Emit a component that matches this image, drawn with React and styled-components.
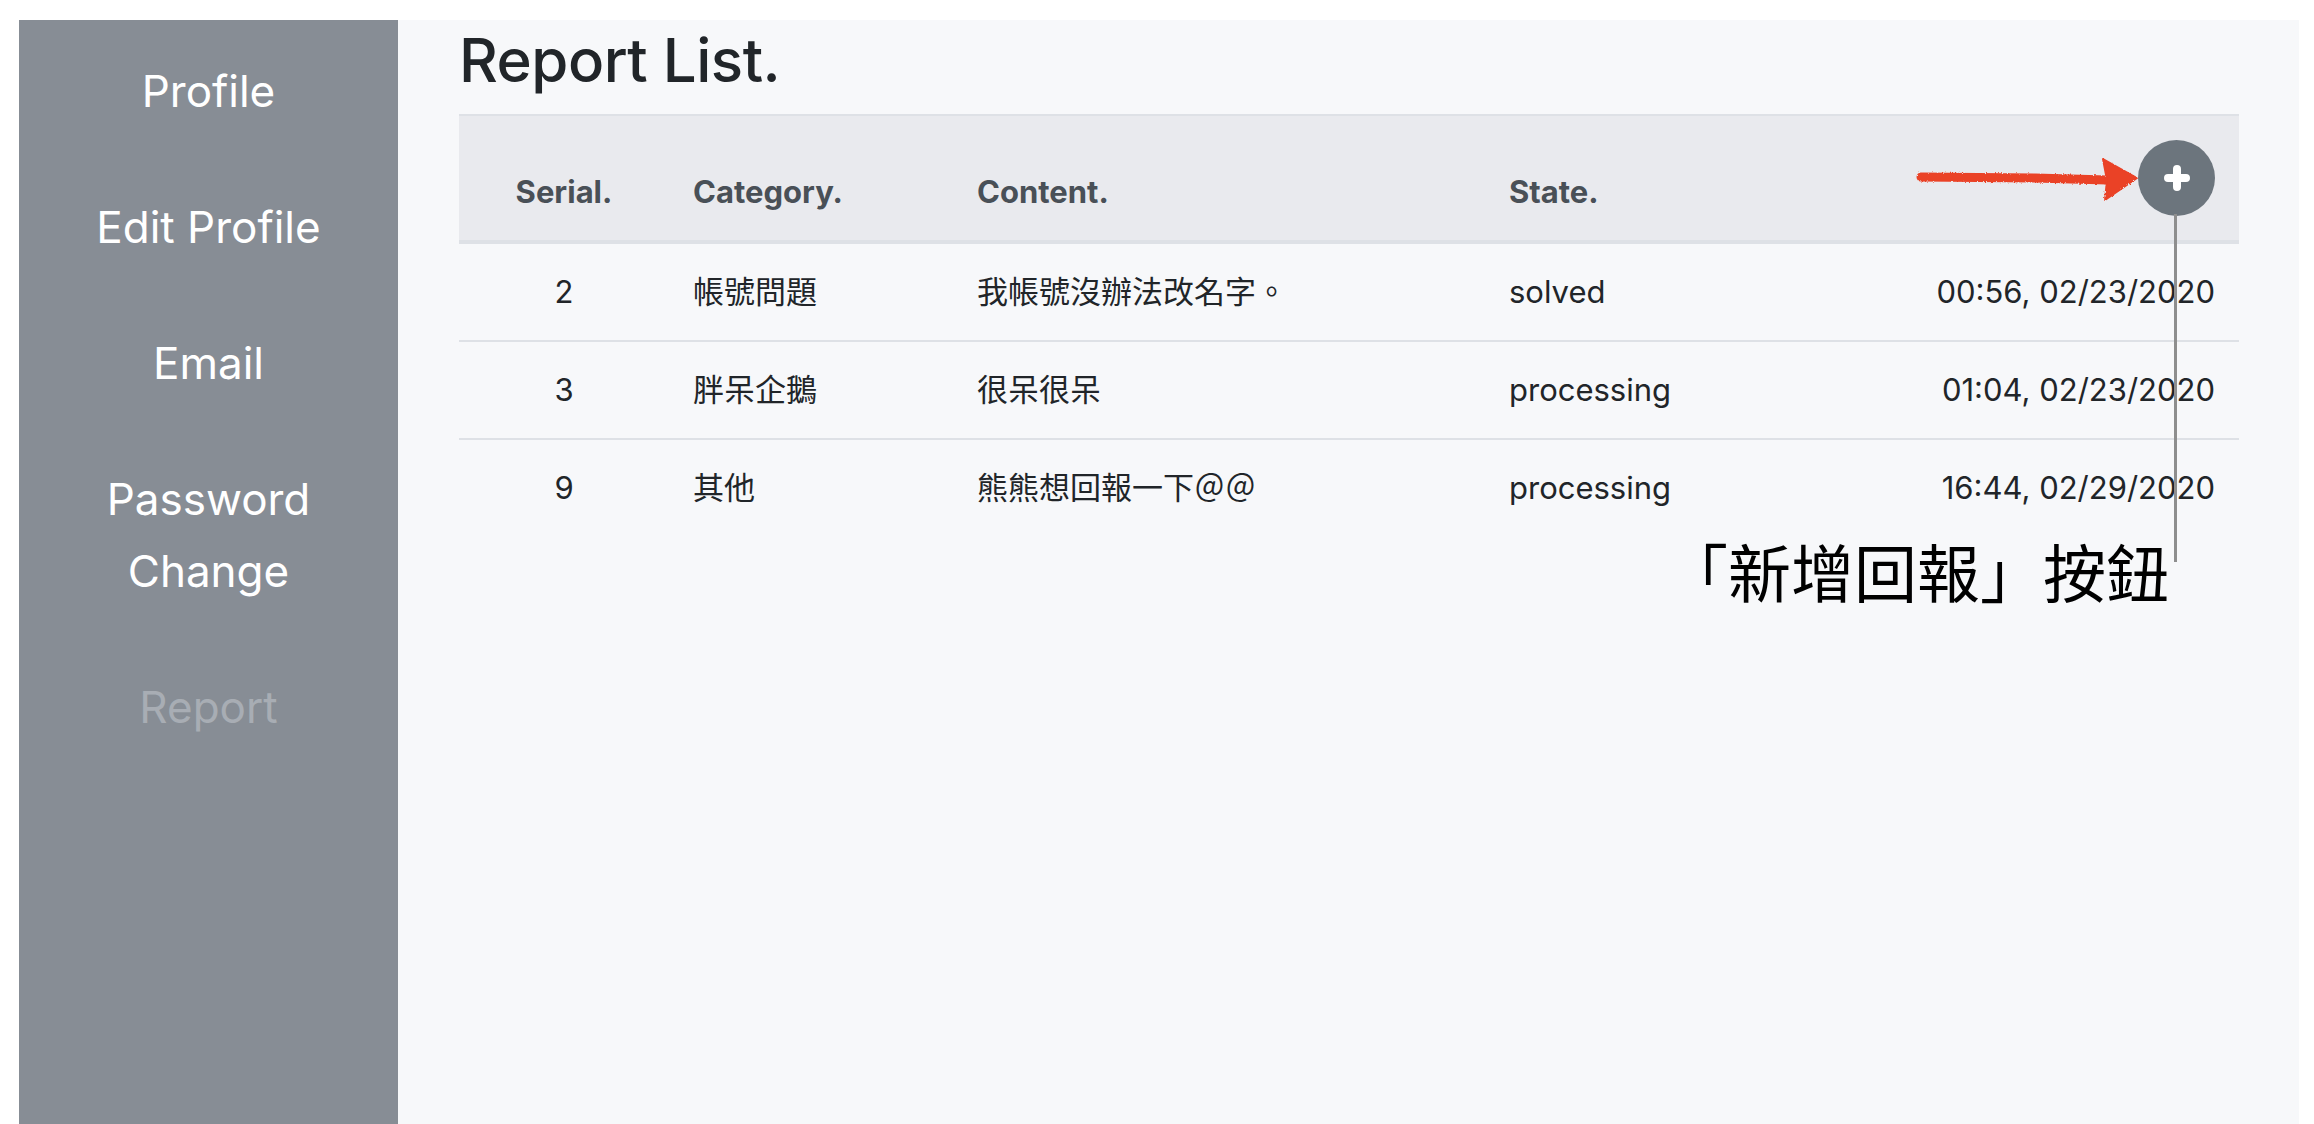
import React from 'react';
import styled, { createGlobalStyle } from 'styled-components';

const GlobalStyle = createGlobalStyle`
  html, body, #root {
    margin: 0;
    height: 100%;
    background: #ffffff;
  }
  body {
    padding: 20px 15px 0 19px;
    box-sizing: border-box;
    overflow: hidden;
    font-family: Inter, "Noto Sans CJK TC", sans-serif;
  }
`;

const reports = [
  { id: 2, category: '帳號問題', content: '我帳號沒辦法改名字。', state: 'solved', time: '00:56, 02/23/2020' },
  { id: 3, category: '胖呆企鵝', content: '很呆很呆', state: 'processing', time: '01:04, 02/23/2020' },
  { id: 9, category: '其他', content: '熊熊想回報一下＠＠', state: 'processing', time: '16:44, 02/29/2020' },
];

const navItems = [
  { label: 'Profile' },
  { label: 'Edit Profile' },
  { label: 'Email' },
  { label: 'Password Change', narrow: true },
  { label: 'Report', muted: true },
];

const PlusIcon = () => (
  <svg width="26" height="26" viewBox="0 0 26 26">
    <path d="M13 4v18M4 13h18" stroke="#fff" strokeWidth="8" strokeLinecap="round" />
  </svg>
);

const RedArrow = () => (
  <svg width="225" height="50" viewBox="0 0 225 50">
    <defs>
      <filter id="rough">
        <feTurbulence type="fractalNoise" baseFrequency="0.6" numOctaves="2" result="n" />
        <feDisplacementMap in="SourceGraphic" in2="n" scale="3" />
      </filter>
    </defs>
    <g filter="url(#rough)" fill="#ea4228" stroke="#ea4228">
      <path d="M6 23 L120 24 L192 26" strokeWidth="9" strokeLinecap="round" fill="none" />
      <polygon points="188,5 222,24 190,46 192,26" strokeWidth="2" strokeLinejoin="round" />
    </g>
  </svg>
);

const App = () => {
  return (
    <>
      <GlobalStyle />
      <Layout>
        <Sidebar>
          {navItems.map((item) => (
            <NavItem key={item.label} $muted={item.muted} $narrow={item.narrow}>
              {item.label}
            </NavItem>
          ))}
        </Sidebar>
        <Main>
          <Title>Report List.</Title>
          <Table>
            <colgroup>
              <col style={{ width: 210 }} />
              <col style={{ width: 284 }} />
              <col style={{ width: 532 }} />
              <col style={{ width: 260 }} />
              <col />
            </colgroup>
            <thead>
              <tr>
                <Th $align="center">Serial.</Th>
                <Th>Category.</Th>
                <Th>Content.</Th>
                <Th>State.</Th>
                <Th $align="right">
                  <AddButton type="button" aria-label="add report">
                    <PlusIcon />
                  </AddButton>
                </Th>
              </tr>
            </thead>
            <tbody>
              {reports.map((r) => (
                <tr key={r.id}>
                  <Td $align="center">{r.id}</Td>
                  <Td>{r.category}</Td>
                  <Td>{r.content}</Td>
                  <Td>{r.state}</Td>
                  <Td $align="right">{r.time}</Td>
                </tr>
              ))}
            </tbody>
          </Table>

          <ArrowMark>
            <RedArrow />
          </ArrowMark>
          <Pointer />
          <Note>「新增回報」按鈕</Note>
        </Main>
      </Layout>
    </>
  );
};

export default App;

const Layout = styled.div`
  display: flex;
  height: 100%;
`;

const Sidebar = styled.nav`
  width: 379px;
  flex-shrink: 0;
  background: #878d95;
  display: flex;
  flex-direction: column;
  padding-top: 3px;
`;

const NavItem = styled.div`
  padding: 32px ${(p) => (p.$narrow ? '80px' : '16px')};
  text-align: center;
  font-size: 44px;
  line-height: 72px;
  color: ${(p) => (p.$muted ? '#a8adb4' : '#ffffff')};
`;

const Main = styled.main`
  position: relative;
  flex: 1;
  background: #f7f8fa;
  padding: 0 60px 0 61px;
`;

const Title = styled.h2`
  margin: 4px 0 18px;
  font-size: 60px;
  line-height: 1.2;
  font-weight: 500;
  color: #212529;
  letter-spacing: -0.5px;
`;

const Table = styled.table`
  width: 100%;
  border-collapse: collapse;
  table-layout: fixed;
  color: #212529;
`;

const Th = styled.th`
  padding: 24px;
  background: #e9eaee;
  color: #495057;
  font-size: 31px;
  line-height: 48px;
  font-weight: 700;
  text-align: ${(p) => p.$align || 'left'};
  vertical-align: bottom;
  border-top: 2px solid #dee1e6;
  border-bottom: 4px solid #dee1e6;
`;

const Td = styled.td`
  padding: 24px;
  font-size: 31px;
  line-height: 48px;
  text-align: ${(p) => p.$align || 'left'};
  vertical-align: top;
  border-top: 2px solid #dee1e6;
  white-space: nowrap;
`;

const AddButton = styled.button`
  width: 77px;
  height: 76px;
  border: none;
  border-radius: 50%;
  background: #6c757d;
  display: inline-flex;
  align-items: center;
  justify-content: center;
  vertical-align: bottom;
  padding: 0;
  cursor: pointer;
`;

const ArrowMark = styled.div`
  position: absolute;
  left: 1517px;
  top: 134px;
  line-height: 0;
`;

const Pointer = styled.div`
  position: absolute;
  left: 1776px;
  top: 194px;
  width: 3px;
  height: 348px;
  background: #8e8e8e;
`;

const Note = styled.div`
  position: absolute;
  right: 130px;
  top: 518px;
  font-family: "Noto Sans CJK TC", sans-serif;
  font-size: 63px;
  line-height: 1;
  color: #000;
  white-space: nowrap;
`;
